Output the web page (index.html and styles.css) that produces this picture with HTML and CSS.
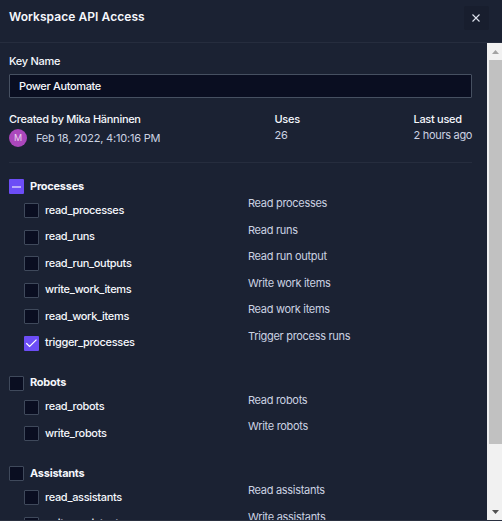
FILE: index.html
```html
<!DOCTYPE html>
<html lang="en">
<head>
<meta charset="utf-8">
<title>Workspace API Access</title>
<link rel="stylesheet" href="styles.css">
</head>
<body>
<div class="dialog">
  <header class="header">
    <h1 class="title">Workspace API Access</h1>
    <button class="close" aria-label="Close"><svg width="8" height="8" viewBox="0 0 8 8"><path d="M0.5 0.5L7.5 7.5M7.5 0.5L0.5 7.5"/></svg></button>
  </header>
  <div class="body">
    <main class="content">
      <label class="field-label" for="key">Key Name</label>
      <input class="field" id="key" value="Power Automate">
      <div class="meta">
        <div>
          <div class="meta-label">Created by Mika Hänninen</div>
          <div class="author"><span class="avatar">M</span><span class="date">Feb 18, 2022, 4:10:16 PM</span></div>
        </div>
        <div><div class="meta-label">Uses</div><div class="meta-value">26</div></div>
        <div><div class="meta-label">Last used</div><div class="meta-value">2 hours ago</div></div>
      </div>
      <section class="group">
        <div class="group-head"><span class="box on"><svg width="15" height="15" viewBox="0 0 15 15"><path class="dash" d="M3 8H12"/></svg></span><h2 class="group-title">Processes</h2></div>
        <div class="row"><span class="box"></span><span class="scope">read_processes</span><span class="desc">Read processes</span></div>
        <div class="row"><span class="box"></span><span class="scope">read_runs</span><span class="desc">Read runs</span></div>
        <div class="row"><span class="box"></span><span class="scope">read_run_outputs</span><span class="desc">Read run output</span></div>
        <div class="row"><span class="box"></span><span class="scope">write_work_items</span><span class="desc">Write work items</span></div>
        <div class="row"><span class="box"></span><span class="scope">read_work_items</span><span class="desc">Read work items</span></div>
        <div class="row"><span class="box on"><svg width="15" height="15" viewBox="0 0 15 15"><path class="tick" d="M2.3 7.3L5.6 10.5L12.5 3.6"/></svg></span><span class="scope">trigger_processes</span><span class="desc">Trigger process runs</span></div>
      </section>
      <section class="group">
        <div class="group-head"><span class="box"></span><h2 class="group-title">Robots</h2></div>
        <div class="row"><span class="box"></span><span class="scope">read_robots</span><span class="desc">Read robots</span></div>
        <div class="row"><span class="box"></span><span class="scope">write_robots</span><span class="desc">Write robots</span></div>
      </section>
      <section class="group">
        <div class="group-head"><span class="box"></span><h2 class="group-title">Assistants</h2></div>
        <div class="row"><span class="box"></span><span class="scope">read_assistants</span><span class="desc">Read assistants</span></div>
        <div class="row"><span class="box"></span><span class="scope">write_assistants</span><span class="desc">Write assistants</span></div>
      </section>
    </main>
    <div class="scrollbar">
      <div class="arrow"><svg width="7" height="4" viewBox="0 0 7 4"><path fill="#a3a3a3" d="M0 4L3.5 0L7 4Z"/></svg></div>
      <div class="thumb"></div>
      <div class="arrow arrow-down"><svg width="7" height="4" viewBox="0 0 7 4"><path fill="#505050" d="M0 0L3.5 4L7 0Z"/></svg></div>
    </div>
  </div>
</div>
</body>
</html>
```
FILE: styles.css
```css
* { box-sizing: border-box; }
body {
  margin: 0;
  background: #1b2233;
  color: #f5f7fc;
  font: 11px/16px Inter, "Liberation Sans", sans-serif;
  letter-spacing: -0.3px;
}
.dialog {
  display: flex;
  flex-direction: column;
  height: 521px;
  overflow: hidden;
  border-bottom: 1px solid #2a3040;
}
.header {
  flex: none;
  display: flex;
  justify-content: space-between;
  align-items: flex-start;
  height: 43px;
  padding: 6px 13px 0 9px;
  border-bottom: 1px solid #262d3e;
}
.title { margin: 3px 0 0; font-size: 12px; line-height: 16px; font-weight: 600; letter-spacing: 0.06px; }
.close {
  display: flex;
  align-items: center;
  justify-content: center;
  width: 25px;
  height: 24px;
  padding: 0 1px 0 0;
  border: 0;
  border-radius: 2px;
  background: #181e2e;
}
.close path { fill: none; stroke: #dfe4ee; stroke-width: 1.1; }
.body { flex: 1; display: flex; min-height: 0; }
.content { flex: 1; min-width: 0; padding: 10px 15px 0 9px; overflow: hidden; }
.field-label { display: block; height: 21px; font-weight: 500; }
.field {
  display: block;
  width: 100%;
  height: 24px;
  padding: 0 9px;
  border: 1px solid #465061;
  border-radius: 1px;
  background: #0a0e21;
  color: #f5f7fc;
  font: 500 11px/16px Inter, sans-serif;
  letter-spacing: -0.35px;
}
.meta {
  display: grid;
  grid-template-columns: 265.5px 139px 1fr;
  height: 52px;
  margin-top: 13px;
  margin-bottom: 16.2px;
  border-bottom: 1px solid #262d3e;
  white-space: nowrap;
}
.meta-label { font-weight: 500; }
.meta-value { color: #cbd2e2; }
.author { display: flex; align-items: center; height: 20px; gap: 9px; color: #cbd2e2; }
.date { padding-top: 2px; letter-spacing: -0.2px; }
.avatar {
  width: 18px;
  height: 18px;
  margin-top: 1px;
  border-radius: 50%;
  background: #ab47bc;
  color: #ead3ef;
  font-size: 9px;
  line-height: 18px;
  letter-spacing: 0;
  text-align: center;
}
.group { margin-bottom: 13.5px; }
.group-head { display: flex; height: 24px; }
.group-title { margin: -1.25px 0 0 6px; font-size: 11px; line-height: 16px; font-weight: 700; letter-spacing: -0.25px; }
.row { display: flex; height: 26.5px; padding-left: 15px; }
.box {
  flex: none;
  width: 15px;
  height: 15px;
  border: 1px solid #3f495b;
  border-radius: 1px;
  background: #0a0e21;
}
.on { border: 0; background: #6c4df6; }
.on svg { display: block; }
.dash { stroke: #b9aafa; stroke-width: 2; }
.tick { fill: none; stroke: #fff; stroke-width: 1.2; }
.scope { width: 203px; margin-left: 6px; margin-top: -1.25px; font-weight: 500; letter-spacing: -0.33px; }
.desc { margin-top: -8px; color: #cbd2e2; }
.scrollbar {
  flex: none;
  display: flex;
  flex-direction: column;
  width: 15px;
  background: #f1f1f1;
}
.arrow { display: flex; align-items: center; justify-content: center; height: 17px; padding-left: 2px; }
.thumb { height: 384px; margin-left: 2px; background: #c1c1c1; }
.arrow-down { margin-top: auto; }
```
